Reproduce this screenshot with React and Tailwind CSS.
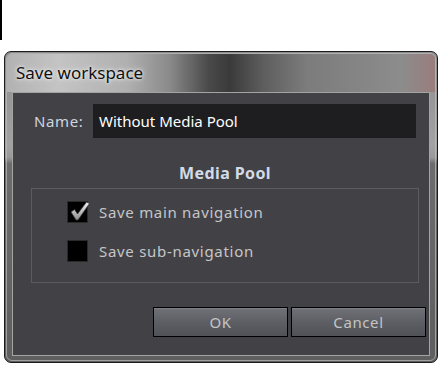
export default function App() {
  return (
    <div className="w-[440px] h-[366px] bg-white overflow-hidden font-['Noto_Sans',sans-serif]">
      <div className="w-[2px] h-[40px] bg-black" />

      {/* window frame */}
      <div className="mt-[11px] ml-[4px] w-[434px] h-[312px] rounded-[7px] border border-[#1c1c1c] bg-[linear-gradient(180deg,#8c8c8c_0%,#a2a2a2_30%,#9a9a9a_34%,#6c6c6c_36%,#5e5e5e_100%)]">
        <div className="m-[1px] h-[308px] rounded-[6px] border border-[#bdbdbd]/70 flex flex-col">
          <div className="h-[38px] rounded-t-[5px] flex items-center pl-[9px] bg-[linear-gradient(90deg,#b2b2b2_0%,#c4c4c4_12%,#b0b0b0_28%,#8a8a8a_38%,#4a4a4a_47%,#3a3a3a_52%,#5e5e5e_60%,#7c7c7c_70%,#8c8c8c_92%,#9a7d7d_100%)]">
            <span className="text-[17px] text-[#101010] leading-none mt-[-2px] [text-shadow:0_0_6px_#e8e8e8,0_0_3px_#ffffff]">
              Save workspace
            </span>
          </div>

          {/* client area */}
          <div className="ml-[5px] w-[418px] h-[264px] border border-[#a4a4a4] bg-[#424246] flex flex-col">
            <div className="mt-[11px] flex items-center">
              <div className="w-[80px] pl-[21px] text-[15px] tracking-[0.6px] text-[#cdd6e0]">Name:</div>
              <div className="w-[323px] h-[34px] bg-[#1e1e20] flex items-center pl-[6px] text-[15px] text-white">
                Without Media Pool
              </div>
            </div>

            <div className="ml-[18px] w-[388px]">
              <div className="mt-[24px] h-[22px] text-center text-[16px] tracking-[0.4px] font-bold text-[#d2dbe6] leading-[22px]">
                Media Pool
              </div>
              <div className="mt-[4px] h-[95px] border border-[#5c5c60] pt-[12px] pl-[35px] flex flex-col gap-[16px]">
                <div className="flex items-center gap-[11px]">
                  <div className="w-[21px] h-[22px] bg-black border border-[#2a2a2a] relative">
                    <svg viewBox="0 0 22 22" className="absolute left-[1px] top-[-3px] w-[22px] h-[24px]">
                      <defs>
                        <linearGradient id="ck" x1="0" y1="0" x2="0" y2="1">
                          <stop offset="0" stopColor="#f4f4f4" />
                          <stop offset="1" stopColor="#8c8c8c" />
                        </linearGradient>
                      </defs>
                      <path
                        d="M2 12 L5.5 9.5 L8.5 14 L17.5 2 L20.5 3.5 L9 20 L7 20 Z"
                        fill="url(#ck)"
                        stroke="#3a3a3a"
                        strokeWidth="0.8"
                      />
                    </svg>
                  </div>
                  <span className="text-[15px] tracking-[0.7px] text-[#c6c6c6]">Save main navigation</span>
                </div>
                <div className="flex items-center gap-[11px]">
                  <div className="w-[21px] h-[22px] bg-black border border-[#2a2a2a]" />
                  <span className="text-[15px] tracking-[0.7px] text-[#c6c6c6]">Save sub-navigation</span>
                </div>
              </div>
            </div>

            <div className="mt-[24px] flex justify-end gap-[3px] pr-[3px]">
              <button className="w-[135px] h-[30px] border border-black bg-[linear-gradient(180deg,#717277_0%,#5e5f64_50%,#515257_100%)] text-[15px] tracking-[0.6px] text-[#c4c4c4] shadow-[inset_0_1px_0_#7e7f84]">
                OK
              </button>
              <button className="w-[135px] h-[30px] border border-black bg-[linear-gradient(180deg,#717277_0%,#5e5f64_50%,#515257_100%)] text-[15px] tracking-[0.6px] text-[#c4c4c4] shadow-[inset_0_1px_0_#7e7f84]">
                Cancel
              </button>
            </div>
          </div>
        </div>
      </div>
    </div>
  );
}
